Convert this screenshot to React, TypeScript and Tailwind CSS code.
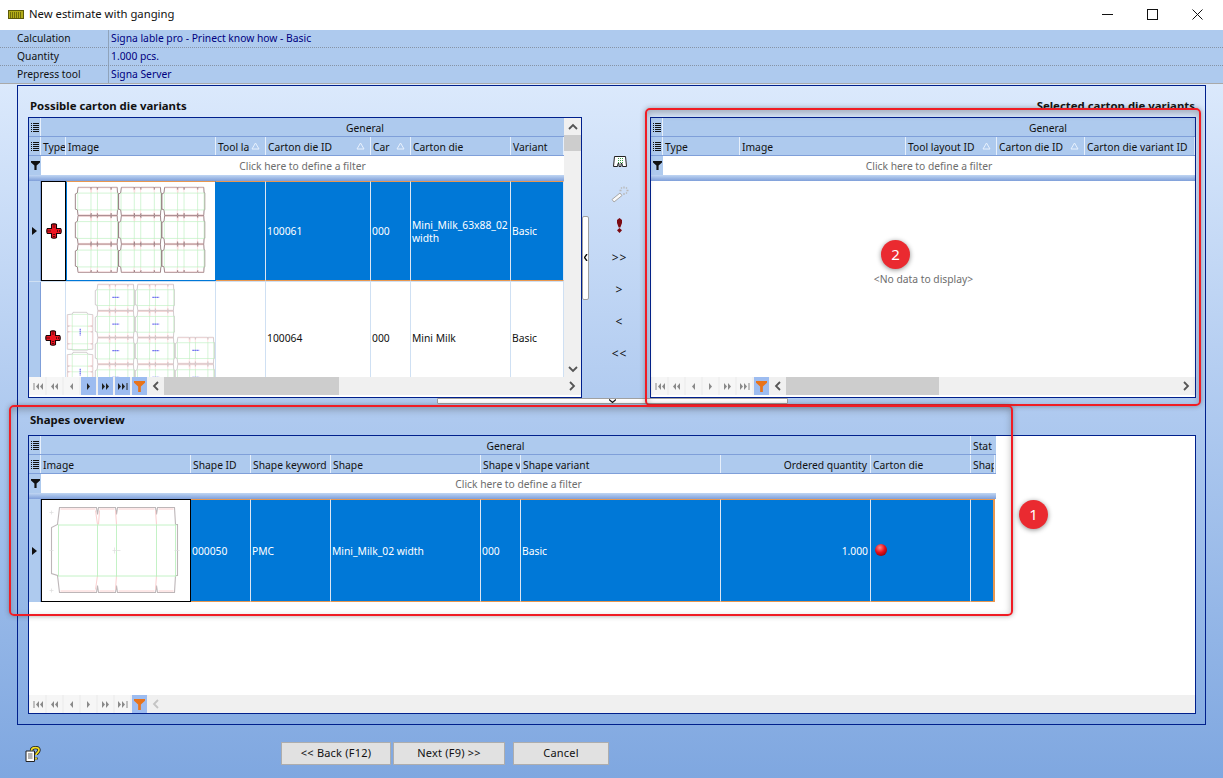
import type { ReactNode } from "react";

type Col = { label: string; w: number; sort?: boolean; right?: boolean };

const leftCols: Col[] = [
  { label: "Type", w: 25 },
  { label: "Image", w: 150 },
  { label: "Tool layout ID", w: 50, sort: true },
  { label: "Carton die ID", w: 105, sort: true },
  { label: "Car", w: 40, sort: true },
  { label: "Carton die", w: 100 },
  { label: "Variant", w: 53 },
];

const rightCols: Col[] = [
  { label: "Type", w: 77 },
  { label: "Image", w: 166 },
  { label: "Tool layout ID", w: 91, sort: true },
  { label: "Carton die ID", w: 88, sort: true },
  { label: "Carton die variant ID", w: 110 },
];

const shapeCols: Col[] = [
  { label: "Image", w: 150 },
  { label: "Shape ID", w: 60 },
  { label: "Shape keyword", w: 80 },
  { label: "Shape", w: 150 },
  { label: "Shape variant ID", w: 40 },
  { label: "Shape variant", w: 200 },
  { label: "Ordered quantity", w: 150, right: true },
  { label: "Carton die", w: 100 },
  { label: "Shape", w: 24 },
];

function ListIcon() {
  return (
    <svg width="8" height="11" viewBox="0 0 8 11" className="shrink-0">
      {[1, 3, 5, 7, 9].map((y) => (
        <g key={y}>
          <rect x="0" y={y} width="1" height="1" fill="#111" />
          <rect x="2" y={y} width="6" height="1" fill="#111" />
        </g>
      ))}
    </svg>
  );
}

function Funnel({ color = "#111", size = 9 }: { color?: string; size?: number }) {
  return (
    <svg width={size} height={size} viewBox="0 0 9 9">
      <path d="M0 0H9V1.5L5.6 4.6V9H3.4V4.6L0 1.5Z" fill={color} />
    </svg>
  );
}

function SortMark() {
  return (
    <svg width="9" height="8" viewBox="0 0 9 8" className="absolute right-[5px] top-[5px]">
      <path d="M4.5 1L8 7H1Z" fill="none" stroke="#e8f1fd" strokeWidth="1" />
    </svg>
  );
}

function RowArrow() {
  return (
    <svg width="5" height="8" viewBox="0 0 5 8">
      <path d="M0 0L5 4L0 8Z" fill="#111" />
    </svg>
  );
}

function RedCross() {
  return (
    <svg width="16" height="16" viewBox="0 0 16 16">
      <path d="M5.5 1.5C6 .5 10 .5 10.5 1.5V5.5H14.5C15.5 6 15.5 10 14.5 10.5H10.5V14.5C10 15.5 6 15.5 5.5 14.5V10.5H1.5C.5 10 .5 6 1.5 5.5H5.5Z" fill="#ee1420" stroke="#1a0406" strokeWidth="1.1" />
      <path d="M8 1.5V5M8 11V14.5M1.5 8H5M11 8H14.5" stroke="#3a0508" strokeWidth="1.6" strokeDasharray="1 1" />
    </svg>
  );
}

// one carton die line, drawn 127x87
function Die({ x, y, sx, sy, rot, dark, mark }: { x: number; y: number; sx: number; sy: number; rot?: boolean; dark?: boolean; mark?: boolean }) {
  const outline = dark ? "#8f7478" : "#bdb6b8";
  const transform = rot
    ? `translate(${x + 87 * sx} ${y}) rotate(90) scale(${sy} ${sx})`
    : `translate(${x} ${y}) scale(${sx} ${sy})`;
  return (
    <g transform={transform} fill="none">
      <path
        d="M9 1H46L47 8L48 1H65L66 8L67 1H105L106 8L107 1H124L125 18H127V69H125L124 86H107L106 79L105 86H67L66 79L65 86H48L47 79L46 86H9L7 69L1 67V21L7 18Z"
        stroke={outline}
        strokeWidth={dark ? 2.6 : mark ? 2.2 : 1.1}
      />
      <path d="M10 2.5H45M49 2.5H64M68 2.5H104M108 2.5H123M10 84.5H45M49 84.5H64M68 84.5H104M108 84.5H123M45 4L47 18M65 4L66 18M105 4L106 18M48 18L49 4M45 83L47 69M65 83L66 69M105 83L106 69" stroke="#fbd0d0" strokeWidth={dark || mark ? 2 : 1} />
      <path d="M8 18.5H126M8 69.5H126M8 18V70M47 18V70M66 18V70M106 18V70M125 18V70" stroke="#bdf0c0" strokeWidth={dark || mark ? 2 : 0.9} />
      {mark && <path d="M56 43H78" stroke="#6a6af0" strokeWidth="4" strokeDasharray="5 1.5" />}
      {!dark && !mark && <path d="M-1 44H3M64 41V47M62 44H70M124 44H129M1 4V8M-1 6H3M1 82V86M-1 84H3" stroke="#dcdcdc" strokeWidth="0.7" />}
    </g>
  );
}

function SingleDie() {
  return (
    <svg width="147" height="100" viewBox="0 0 147 100">
      <Die x={8.5} y={6.5} sx={1} sy={1} />
    </svg>
  );
}

function GangA() {
  const dies = [];
  for (let r = 0; r < 3; r++) {
    for (let c = 0; c < 3; c++) {
      dies.push(<Die key={`${r}-${c}`} x={8 + c * 43.3} y={5 + r * 28.5} sx={0.34} sy={0.33} dark />);
    }
  }
  return (
    <svg width="147" height="98" viewBox="0 0 147 98">
      {dies}
    </svg>
  );
}

function GangB() {
  const dies = [];
  for (let r = 0; r < 4; r++) {
    for (let c = 0; c < 2; c++) {
      dies.push(<Die key={`${r}-${c}`} x={29 + c * 40} y={2 + r * 26.7} sx={0.31} sy={0.31} mark />);
    }
  }
  return (
    <svg width="150" height="112" viewBox="0 0 150 112" className="absolute left-0 top-0">
      {dies}
      <Die x={109} y={55} sx={0.31} sy={0.31} mark />
      <Die x={109} y={82} sx={0.31} sy={0.31} mark />
      <Die x={1} y={30} sx={0.3} sy={0.3} rot mark />
      <Die x={1} y={70} sx={0.3} sy={0.3} rot mark />
    </svg>
  );
}

function NavGlyph({ kind, dark }: { kind: string; dark?: boolean }) {
  const c = dark ? "#222" : "#8a8a8a";
  const tri = (x: number, left: boolean) => (left ? `M${x + 3} 1V8L${x} 4.5Z` : `M${x} 1V8L${x + 3} 4.5Z`);
  let d = "";
  let bar = null;
  if (kind === "first") {
    d = tri(3, true) + tri(7, true);
    bar = <rect x="0.5" y="1" width="1" height="7" fill={c} />;
  }
  if (kind === "pp") d = tri(1, true) + tri(5, true);
  if (kind === "p") d = tri(3, true);
  if (kind === "n") d = tri(3, false);
  if (kind === "nn") d = tri(1, false) + tri(5, false);
  if (kind === "last") {
    d = tri(0, false) + tri(4, false);
    bar = <rect x="8.5" y="1" width="1" height="7" fill={c} />;
  }
  return (
    <svg width="10" height="9" viewBox="0 0 10 9">
      <path d={d} fill={c} />
      {bar}
    </svg>
  );
}

function Chevron({ dir, color = "#555" }: { dir: "l" | "r" | "u" | "d"; color?: string }) {
  const d = { l: "M6 1L2 5L6 9", r: "M3 1L7 5L3 9", u: "M1 7L5 3L9 7", d: "M1 3L5 7L9 3" }[dir];
  return (
    <svg width="10" height="10" viewBox="0 0 10 10">
      <path d={d} fill="none" stroke={color} strokeWidth="1.8" />
    </svg>
  );
}

function NavBar({ active, thumb, disabled, pad }: { active: boolean; thumb: number; disabled?: boolean; pad?: boolean }) {
  const keys = ["first", "pp", "p", "n", "nn", "last"];
  return (
    <div className={`shrink-0 bg-white ${pad ? "pb-[2px]" : "pb-0"}`}>
      <div className="flex h-[18px] items-stretch bg-[#f0f0f0] pl-px">
        <div className="flex gap-[2px]">
          {keys.map((k, i) => {
            const on = active && i > 2;
            return (
              <div key={k} className={`flex w-[15px] items-center justify-center ${on ? "bg-[#9dbcf0]" : "bg-[#f6f6f6]"}`}>
                <NavGlyph kind={k} dark={on} />
              </div>
            );
          })}
          <div className="flex w-[15px] items-center justify-center bg-[#9dbcf0]">
            <Funnel color="#e8731a" size={11} />
          </div>
          <div className="flex w-[15px] items-center justify-center">
            <Chevron dir="l" color={disabled ? "#c4c4c4" : "#555"} />
          </div>
        </div>
        <div className="flex-1">
          {thumb > 0 && <div className="h-full bg-[#cdcdcd]" style={{ width: thumb }} />}
        </div>
        {!disabled && (
          <div className="flex w-[18px] items-center justify-center">
            <Chevron dir="r" />
          </div>
        )}
      </div>
    </div>
  );
}

function BandRow({ children }: { children: ReactNode }) {
  return (
    <div className="flex h-[19px] shrink-0 overflow-hidden border-b border-b-[#7f9fd9] bg-[#aecaee]">
      <div className="flex w-[12px] shrink-0 items-center justify-center border-r border-r-[#e6effb]">
        <ListIcon />
      </div>
      {children}
    </div>
  );
}

function HeaderRow({ cols }: { cols: Col[] }) {
  return (
    <div className="flex h-[19px] shrink-0 border-b border-b-[#7f9fd9] bg-[#aecaee]">
      <div className="flex w-[12px] shrink-0 items-center justify-center border-r border-r-[#e6effb]">
        <ListIcon />
      </div>
      {cols.map((c, i) => (
        <div
          key={i}
          style={{ width: c.w }}
          className={`relative shrink-0 overflow-hidden whitespace-nowrap border-r border-r-[#e6effb] pl-[2px] pr-[3px] leading-[20px] text-[#111] ${c.right ? "text-right" : ""}`}
        >
          {c.label}
          {c.sort && (
            <div className="absolute right-0 top-0 h-full w-[16px] bg-[#aecaee]">
              <SortMark />
            </div>
          )}
        </div>
      ))}
    </div>
  );
}

function FilterRow() {
  return (
    <div className="flex h-[25px] shrink-0">
      <div className="flex w-[12px] shrink-0 flex-col">
        <div className="flex h-[19px] items-center justify-center bg-[#aecaee]">
          <Funnel />
        </div>
        <div className="h-[6px] bg-gradient-to-b from-[#c0d6f3] to-[#7f9fd9]" />
      </div>
      <div className="flex min-w-0 flex-1 flex-col">
        <div className="h-[19px] bg-white text-center leading-[21px] text-[#6d6d6d]">Click here to define a filter</div>
        <div className="h-[6px] bg-gradient-to-b from-[#c0d6f3] to-[#7f9fd9]" />
      </div>
    </div>
  );
}

function Cell({ w, selected, right, children }: { w: number; selected?: boolean; right?: boolean; children?: ReactNode }) {
  const base = selected
    ? "border-y border-y-[#e8974f] border-r-[#dbe6f3] bg-[#0078d7] text-white"
    : "border-r-[#cfe0f3] bg-white text-[#111]";
  return (
    <div
      style={{ width: w }}
      className={`flex shrink-0 items-center overflow-hidden border-r px-[1px] pt-[1px] leading-[13px] ${base} ${right ? "justify-end pr-[2px]" : ""}`}
    >
      {children}
    </div>
  );
}

function Indicator({ arrow }: { arrow?: boolean }) {
  return (
    <div className="flex w-[12px] shrink-0 items-center justify-center border-r border-r-[#7f9fd9] bg-[#aecaee]">
      {arrow && <RowArrow />}
    </div>
  );
}

function VScroll() {
  return (
    <div className="flex w-[17px] shrink-0 flex-col bg-[#f0f0f0]">
      <div className="flex h-[17px] items-center justify-center">
        <Chevron dir="u" />
      </div>
      <div className="h-[16px] bg-[#cdcdcd]" />
      <div className="flex-1" />
      <div className="flex h-[17px] items-center justify-center">
        <Chevron dir="d" />
      </div>
    </div>
  );
}

function PossibleGrid() {
  const w = leftCols.map((c) => c.w);
  return (
    <div className="flex h-[281px] w-[554px] shrink-0 flex-col border border-[#00208c] bg-white">
      <div className="flex min-h-0 flex-1">
        <div className="flex w-[535px] shrink-0 flex-col overflow-hidden">
          <BandRow>
            <div className="w-[648px] shrink-0 text-center leading-[20px] text-[#111]">General</div>
          </BandRow>
          <HeaderRow cols={leftCols} />
          <FilterRow />
          <div className="flex h-[101px] shrink-0 border-b border-b-[#cfe0f3]">
            <Indicator arrow />
            <div style={{ width: w[0] }} className="flex shrink-0 items-center justify-center border-[1.5px] border-black bg-white">
              <RedCross />
            </div>
            <div style={{ width: w[1] }} className="shrink-0 border-[1.5px] border-[#0078d7] border-t-[#e8974f] bg-white">
              <GangA />
            </div>
            <Cell w={w[2]} selected />
            <Cell w={w[3]} selected>100061</Cell>
            <Cell w={w[4]} selected>000</Cell>
            <Cell w={w[5]} selected>Mini_Milk_63x88_02 width</Cell>
            <Cell w={w[6]} selected>Basic</Cell>
          </div>
          <div className="flex h-[112px] shrink-0">
            <Indicator />
            <div style={{ width: w[0] }} className="flex shrink-0 items-center justify-center border-r border-r-[#cfe0f3] bg-white">
              <RedCross />
            </div>
            <div style={{ width: w[1] }} className="relative shrink-0 overflow-hidden border-r border-r-[#cfe0f3] bg-white">
              <GangB />
            </div>
            <Cell w={w[2]} />
            <Cell w={w[3]}>100064</Cell>
            <Cell w={w[4]}>000</Cell>
            <Cell w={w[5]}>Mini Milk</Cell>
            <Cell w={w[6]}>Basic</Cell>
          </div>
        </div>
        <VScroll />
      </div>
      <NavBar active thumb={175} pad />
    </div>
  );
}

function SelectedGrid() {
  return (
    <div className="flex h-[281px] w-[546px] shrink-0 flex-col border border-[#00208c] bg-white">
      <BandRow>
        <div className="w-[770px] shrink-0 text-center leading-[20px] text-[#111]">General</div>
      </BandRow>
      <HeaderRow cols={rightCols} />
      <FilterRow />
      <div className="flex min-h-0 flex-1 items-center justify-center pl-[1px] pt-[1px] text-[#6d6d6d]">&lt;No data to display&gt;</div>
      <NavBar active={false} thumb={153} pad />
    </div>
  );
}

function ShapesGrid() {
  const w = shapeCols.map((c) => c.w);
  return (
    <div className="flex h-[279px] w-[1168px] flex-col border border-[#00208c] bg-white">
      <div className="flex min-h-0 flex-1 flex-col">
        <div className="w-[967px]">
          <BandRow>
            <div className="w-[930px] shrink-0 border-r border-r-[#e6effb] text-center leading-[20px] text-[#111]">General</div>
            <div className="overflow-hidden pl-[2px] leading-[20px] text-[#111]">Stat</div>
          </BandRow>
          <HeaderRow cols={shapeCols} />
          <FilterRow />
          <div className="flex h-[103px]">
            <Indicator arrow />
            <div style={{ width: w[0] }} className="shrink-0 border-[1.5px] border-black bg-white">
              <SingleDie />
            </div>
            <Cell w={w[1]} selected>000050</Cell>
            <Cell w={w[2]} selected>PMC</Cell>
            <Cell w={w[3]} selected>Mini_Milk_02 width</Cell>
            <Cell w={w[4]} selected>000</Cell>
            <Cell w={w[5]} selected>Basic</Cell>
            <Cell w={w[6]} selected right>1.000</Cell>
            <Cell w={w[7]} selected>
              <span className="ml-[3px] mt-[-3px] h-[12px] w-[12px] rounded-full bg-[radial-gradient(circle_at_40%_30%,#ff8a8a_0%,#e8101a_45%,#5a0006_100%)]" />
            </Cell>
            <div className="w-[24px] shrink-0 border-y border-r-2 border-y-[#e8974f] border-r-[#e8974f] bg-[#0078d7]" />
          </div>
        </div>
      </div>
      <NavBar active={false} thumb={0} disabled />
    </div>
  );
}

function MiddleButtons() {
  return (
    <div className="flex flex-1 flex-col items-center text-[#111]">
      <div className="flex h-[32px] items-center">
        <svg width="14" height="11" viewBox="0 0 14 11">
          <path d="M1.5 .5H12.5L13.5 10.5H9.5L9 7.5H8V10.5H6V7.5H5L4.5 10.5H.5Z" fill="#fff" stroke="#222" strokeWidth="1" />
          <path d="M5 2.5H10M5 4.5H10M5 6.5H10" stroke="#3aa04a" strokeWidth="1.2" strokeDasharray="1 1" />
        </svg>
      </div>
      <div className="flex h-[32px] items-center">
        <svg width="18" height="18" viewBox="0 0 18 18">
          <path d="M1 14.5L9 8L11 10.5L3 17Z" fill="#fafafa" stroke="#a8a8a8" />
          <path d="M13 1.5V3.5M13 8V10M8.5 5.5H10.5M15.5 5.5H17.5M10 2.5L11 3.5M16 2.5L15 3.5M16 8.5L15 7.5" stroke="#b8b8b8" strokeWidth="1.3" />
        </svg>
      </div>
      <div className="flex h-[32px] items-center">
        <svg width="7" height="15" viewBox="0 0 7 15">
          <path d="M3.5 0L6 2V5L4.3 9.5H2.7L1 5V2Z M3.5 10L6 12.3L3.5 15L1 12.3Z" fill="#7c0a12" />
        </svg>
      </div>
      {[">>", ">", "<", "<<"].map((s) => (
        <div key={s} className="flex h-[32px] items-center text-[12px] tracking-[1px]">
          {s}
        </div>
      ))}
    </div>
  );
}

function InfoRow({ label, value, last }: { label: string; value: string; last?: boolean }) {
  return (
    <div className={`flex h-[18px] bg-[#aecaee] ${last ? "border-b border-b-[#a9a9a9]" : "border-b border-dotted border-b-[#8794a6]"}`}>
      <div className="w-[109px] shrink-0 border-r border-r-[#8fa3bb] pl-[17px] leading-[17px] text-[#111]">{label}</div>
      <div className="pl-[2px] leading-[17px] text-[#000080]">{value}</div>
    </div>
  );
}

function Button({ w, children }: { w: number; children: ReactNode }) {
  return (
    <div style={{ width: w }} className="flex h-[23px] items-center justify-center border border-[#adadad] bg-[#e1e1e1] text-[11px] tracking-[0.2px] text-[#111]">
      {children}
    </div>
  );
}

export default function App() {
  return (
    <div className="relative flex h-[778px] w-[1223px] flex-col overflow-hidden bg-white font-['Noto_Sans',sans-serif] text-[10.3px]">
      {/* title bar */}
      <div className="flex h-[30px] shrink-0 items-center bg-white pb-[1px] pr-[3px]">
        <svg width="16" height="9" viewBox="0 0 16 9" className="ml-[8px]">
          <rect width="16" height="9" fill="#b2ac18" />
          <rect x="0.5" y="0.5" width="15" height="8" fill="none" stroke="#5c5a08" />
          <path d="M2 3H14M2 5H14M2 7H14" stroke="#2c2c00" strokeWidth="1" strokeDasharray="1 1" />
        </svg>
        <span className="ml-[5px] text-[11.3px] text-[#111]">New estimate with ganging</span>
        <div className="ml-auto flex items-center">
          <div className="flex w-[45px] items-center justify-center">
            <svg width="11" height="11" viewBox="0 0 11 11">
              <path d="M0 5.5H11" stroke="#111" />
            </svg>
          </div>
          <div className="flex w-[45px] items-center justify-center">
            <svg width="11" height="11" viewBox="0 0 11 11">
              <rect x="0.5" y="0.5" width="10" height="10" fill="none" stroke="#111" />
            </svg>
          </div>
          <div className="flex w-[45px] items-center justify-center">
            <svg width="11" height="11" viewBox="0 0 11 11">
              <path d="M0.5 0.5L10.5 10.5M10.5 0.5L0.5 10.5" stroke="#111" />
            </svg>
          </div>
        </div>
      </div>

      {/* job info */}
      <div className="shrink-0">
        <InfoRow label="Calculation" value="Signa lable pro - Prinect know how - Basic" />
        <InfoRow label="Quantity" value="1.000 pcs." />
        <InfoRow label="Prepress tool" value="Signa Server" last />
      </div>

      {/* wizard body */}
      <div className="flex flex-1 flex-col bg-gradient-to-b from-[#dbe9fc] to-[#7fa7e0] pl-[17px] pt-px">
        <div className="flex h-[640px] w-[1189px] shrink-0 flex-col border border-[#00208c] pl-[10px] pr-[9px]">
          <div className="flex h-[31px] items-end justify-between pb-[3px] pl-[2px] pr-[1px] text-[11.4px] font-bold text-[#111]">
            <span>Possible carton die variants</span>
            <span>Selected carton die variants</span>
          </div>
          <div className="flex h-[281px]">
            <PossibleGrid />
            <div className="flex flex-1 items-center">
              <div className="flex h-[84px] w-[7px] items-center justify-center rounded-[2px] border border-[#a0a0a0] bg-white">
                <svg width="4" height="7" viewBox="0 0 4 7">
                  <path d="M3 0L0.5 3.5L3 7" fill="none" stroke="#111" strokeWidth="1.4" />
                </svg>
              </div>
              <MiddleButtons />
            </div>
            <SelectedGrid />
          </div>
          <div className="flex h-[6px] justify-center">
            <div className="flex h-[6px] w-[351px] items-center justify-center rounded-b-[1px] border border-[#a0a0a0] bg-white">
              <svg width="7" height="4" viewBox="0 0 7 4">
                <path d="M0 0.5L3.5 3.5L7 0.5" fill="none" stroke="#111" strokeWidth="1.2" />
              </svg>
            </div>
          </div>
          <div className="flex h-[31px] items-center pl-[2px] text-[11.4px] font-bold text-[#111]">Shapes overview</div>
          <ShapesGrid />
        </div>

        {/* footer */}
        <div className="flex flex-1 items-start pt-[21px]">
          <svg width="16" height="16" viewBox="0 0 16 16" className="ml-[8px]">
            <path d="M1 5H9.5V15.5H1Z" fill="#fff" stroke="#222" />
            <path d="M3 8H7.5M3 10H7.5M3 12H7.5" stroke="#666" />
            <path d="M6.5 4.5C6.5 1 14 .5 14 4C14 7 11 6.5 11 9M11 11.5V13.5" fill="none" stroke="#222" strokeWidth="3.4" />
            <path d="M6.5 4.5C6.5 1 14 .5 14 4C14 7 11 6.5 11 9M11 11.5V13.5" fill="none" stroke="#f6e020" strokeWidth="1.7" />
          </svg>
          <div className="ml-[240px] mt-[-4px] flex">
            <Button w={110}>&lt;&lt; Back (F12)</Button>
            <div className="w-[2px]" />
            <Button w={112}>Next (F9) &gt;&gt;</Button>
            <div className="w-[8px]" />
            <Button w={96}>Cancel</Button>
          </div>
        </div>
      </div>

      {/* call-outs drawn over the screenshot */}
      <div className="absolute left-[645px] top-[108px] h-[298px] w-[556px] rounded-[5px] border-2 border-[#f01c24] shadow-[0_0_5px_rgba(60,60,60,0.45),inset_0_3px_7px_rgba(60,60,60,0.35)]" />
      <div className="absolute left-[9px] top-[405px] h-[211px] w-[1004px] rounded-[5px] border-2 border-[#f01c24] shadow-[0_0_5px_rgba(60,60,60,0.45),inset_0_3px_7px_rgba(60,60,60,0.35)]" />
      <div className="absolute left-[1019px] top-[500px] flex h-[29px] w-[29px] items-center justify-center rounded-full bg-[#ea2a30] text-[15px] text-white shadow-[0_1px_5px_rgba(0,0,0,0.45)]">1</div>
      <div className="absolute left-[881px] top-[240px] flex h-[29px] w-[29px] items-center justify-center rounded-full bg-[#ea2a30] text-[15px] text-white shadow-[0_1px_5px_rgba(0,0,0,0.45)]">2</div>
    </div>
  );
}
